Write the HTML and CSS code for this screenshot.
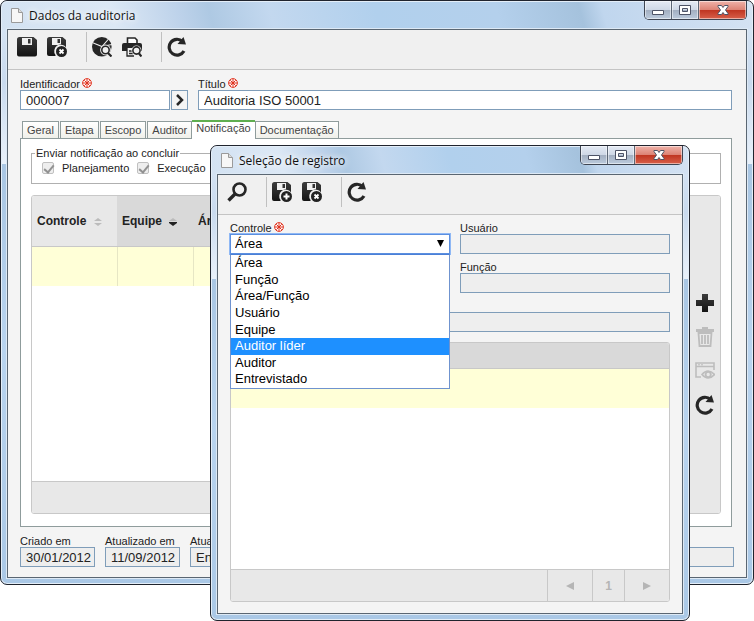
FILE: index.html
```html
<!DOCTYPE html>
<html lang="pt-BR">
<head>
  <meta charset="UTF-8" />
  <meta name="viewport" content="width=device-width, initial-scale=1" />
  <title>Dados da auditoria</title>
  <link rel="stylesheet" href="styles.css">
</head>
<body>

<svg class="sprite" aria-hidden="true">
  <defs>
    <linearGradient id="ink" x1="0" y1="0" x2="0" y2="1">
      <stop offset="0" stop-color="#3c3c3c" />
      <stop offset="1" stop-color="#141414" />
    </linearGradient>
  </defs>
  <symbol id="page" viewBox="0 0 12 15">
    <path d="M.5 .5h7l4 4v10h-11z" fill="#f7f7f7" stroke="#9a9a9a" />
    <path d="M7.500 .5v4h4" fill="#ddd" stroke="#9a9a9a" />
  </symbol>
  <symbol id="disk" viewBox="0 0 20 20">
    <path fill="url(#ink)" fill-rule="evenodd" d="M2.500 0h14l3.500 3v14.500q0 2-2 2H2q-2 0-2-2V2.500Q0 0 2.500 0zM5 1v7h10V1zM11 2h2.500v4.500H11z" />
  </symbol>
  <symbol id="disk-cut" viewBox="0 0 20 20">
    <path fill="url(#ink)" fill-rule="evenodd" d="M2.500 0h13l3.500 3v7.200a6.500 6.500 0 0 0-10.500 7.800v1H2q-2 0-2-2V2.500Q0 0 2.500 0zM5 1v7h9V1zM10.500 2H13v4h-2.500z" />
    <circle cx="14.500" cy="14.500" r="5.500" fill="#222" />
  </symbol>
  <symbol id="disk-close" viewBox="0 0 20 20">
    <use href="#disk-cut" />
    <path d="M12.500 12.500l4 4m0-4l-4 4" stroke="#fff" stroke-width="1.800" />
  </symbol>
  <symbol id="disk-add" viewBox="0 0 20 20">
    <use href="#disk-cut" />
    <path d="M14.500 11.500v6m-3-3h6" stroke="#fff" stroke-width="2" />
  </symbol>
  <symbol id="chart" viewBox="0 0 20 20">
    <circle cx="9.800" cy="9.800" r="9.800" fill="#262626" />
    <path d="M0 5.500l10 4L17 1.500M10 9.500l10-2" fill="none" stroke="#f0f0f0" stroke-width="1.100" />
    <circle cx="13.500" cy="13" r="5.400" fill="#f0f0f0" />
    <path d="M15 15l5 1v4h-4z" fill="#f0f0f0" />
    <circle cx="13.500" cy="13" r="3.700" fill="#f0f0f0" stroke="#262626" stroke-width="1.600" />
    <path d="M16 16l3.500 3.500" stroke="#262626" stroke-width="2.200" />
  </symbol>
  <symbol id="print" viewBox="0 0 20 20">
    <path d="M5.500 7V1h7.500l2 2v4" fill="#fff" stroke="#262626" stroke-width="1.600" />
    <path d="M2 6h16q2 0 2 2v6h-4v-3H5v3H0V8q0-2 2-2z" fill="#262626" />
    <path d="M5 11v8h7M7 14h4M7 16.500h4" fill="none" stroke="#262626" stroke-width="1.300" />
    <circle cx="14.500" cy="13.500" r="5" fill="#f0f0f0" />
    <circle cx="14.500" cy="13.500" r="3.600" fill="#f0f0f0" stroke="#262626" stroke-width="1.600" />
    <path d="M17 16.500l2.500 3" stroke="#262626" stroke-width="2.200" />
  </symbol>
  <symbol id="refresh" viewBox="0 0 20 20">
    <path d="M15.500 4.400A7.900 7.900 0 1 0 17 14" fill="none" stroke="#262626" stroke-width="3.200" />
    <path d="M16.500 0l2.500 7.500-8.500-.5z" fill="#262626" />
  </symbol>
  <symbol id="search" viewBox="0 0 20 20">
    <circle cx="12.500" cy="7.500" r="6" fill="none" stroke="#262626" stroke-width="2.600" />
    <path d="M8 12l-6.500 6.500" stroke="#262626" stroke-width="3.400" />
  </symbol>
  <symbol id="plus" viewBox="0 0 20 20">
    <path d="M7 1h6v6h6v6h-6v6H7v-6H1V7h6z" fill="url(#ink)" />
  </symbol>
  <symbol id="trash" viewBox="0 0 20 20">
    <path d="M1 2h6V0h6v2h6v3H1z" fill="#bdbdbd" />
    <path d="M3.500 6l1 13h11l1-13zM7 8v9M10 8v9M13 8v9" fill="none" stroke="#bdbdbd" stroke-width="1.800" />
  </symbol>
  <symbol id="preview" viewBox="0 0 20 20">
    <path d="M6 16H1V2h18v7M1 5.500h18" fill="none" stroke="#bdbdbd" stroke-width="1.600" />
    <path d="M3 3.800h2m1 0h2" stroke="#bdbdbd" />
    <path d="M7 13.500q6-7 12.500 0-6.500 7-12.500 0z" fill="#e8e8e8" stroke="#bdbdbd" stroke-width="1.600" />
    <circle cx="13.200" cy="13.500" r="2.600" fill="none" stroke="#bdbdbd" stroke-width="1.800" />
  </symbol>
  <symbol id="required" viewBox="0 0 10 10">
    <circle cx="5" cy="5" r="4.400" fill="#fff" stroke="#e0321e" />
    <path d="M5 1v8M1 5h8M2.300 2.300l5.400 5.400M7.700 2.300L2.300 7.700" stroke="#e0321e" stroke-width="1" />
  </symbol>
  <symbol id="win-min" viewBox="0 0 14 12">
    <path d="M1.500 6.500h11v4h-11z" fill="#fff" stroke="#4d5366" />
  </symbol>
  <symbol id="win-max" viewBox="0 0 14 12">
    <path fill-rule="evenodd" d="M1.500 1.500h11v9h-11zM4.500 4.500h5v3h-5z" fill="#fff" stroke="#4d5366" />
  </symbol>
  <symbol id="win-close" viewBox="0 0 14 12">
    <path d="M2 1.500h3.500L7 3.500l1.500-2H12v1L9.500 6 12 9.500v1H8.500L7 8.500l-1.500 2H2v-1L4.500 6 2 2.500z" fill="#fff" stroke="#4d5366" />
  </symbol>
</svg>

<main class="desktop">

  <section class="window" aria-label="Dados da auditoria">
    <header class="titlebar">
      <svg class="page-icon"><use href="#page" /></svg>
      <h1>Dados da auditoria</h1>
      <div class="win-buttons">
        <button type="button" class="win-btn" aria-label="Minimizar"><svg><use href="#win-min" /></svg></button>
        <button type="button" class="win-btn" aria-label="Maximizar"><svg><use href="#win-max" /></svg></button>
        <button type="button" class="win-btn close" aria-label="Fechar"><svg><use href="#win-close" /></svg></button>
      </div>
    </header>
    <div class="client">
      <div class="toolbar">
        <button type="button" class="icon-btn" aria-label="Salvar"><svg><use href="#disk" /></svg></button>
        <button type="button" class="icon-btn" aria-label="Salvar e sair"><svg><use href="#disk-close" /></svg></button>
        <span class="sep"></span>
        <button type="button" class="icon-btn" aria-label="Relatório"><svg><use href="#chart" /></svg></button>
        <button type="button" class="icon-btn" aria-label="Visualizar impressão"><svg><use href="#print" /></svg></button>
        <span class="sep"></span>
        <button type="button" class="icon-btn" aria-label="Atualizar"><svg><use href="#refresh" /></svg></button>
      </div>

      <form class="audit">
        <div class="fields">
          <div class="field field-id">
            <label for="ident">Identificador <svg class="req"><use href="#required" /></svg></label>
            <div class="combo">
              <input type="text" id="ident" value="000007" />
              <button type="button" class="go" aria-label="Próximo">
                <svg viewBox="0 0 10 12"><path d="M2 1l5 5-5 5" /></svg>
              </button>
            </div>
          </div>
          <div class="field grow">
            <label for="titulo">Título <svg class="req"><use href="#required" /></svg></label>
            <input type="text" id="titulo" value="Auditoria ISO 50001" />
          </div>
        </div>

        <div class="tabs" role="tablist">
          <button type="button" class="tab" role="tab">Geral</button>
          <button type="button" class="tab" role="tab">Etapa</button>
          <button type="button" class="tab" role="tab">Escopo</button>
          <button type="button" class="tab" role="tab">Auditor</button>
          <button type="button" class="tab active" role="tab" aria-selected="true">Notificação</button>
          <button type="button" class="tab" role="tab">Documentação</button>
        </div>

        <div class="panel">
          <fieldset class="notify">
            <legend>Enviar notificação ao concluir</legend>
            <label class="check"><input type="checkbox" checked disabled />Planejamento</label>
            <label class="check"><input type="checkbox" checked disabled />Execução</label>
          </fieldset>

          <div class="grid">
            <div class="grid-main">
              <table class="audit-table">
                <thead>
                  <tr>
                    <th class="col-control">Controle <svg class="sort off" viewBox="0 0 8 8"><path d="M0 3l4-3 4 3zM0 5l4 3 4-3z" /></svg></th>
                    <th class="col-team">Equipe <svg class="sort" viewBox="0 0 8 8"><path class="up" d="M0 3l4-3 4 3z" /><path d="M0 4h8v1L4 8 0 5z" /></svg></th>
                    <th>Área</th>
                  </tr>
                </thead>
                <tbody>
                  <tr><td></td><td></td><td></td></tr>
                </tbody>
              </table>
              <div class="grid-foot"></div>
            </div>
            <div class="grid-tools">
              <button type="button" class="icon-btn" aria-label="Adicionar"><svg><use href="#plus" /></svg></button>
              <button type="button" class="icon-btn" aria-label="Excluir" disabled><svg><use href="#trash" /></svg></button>
              <button type="button" class="icon-btn" aria-label="Visualizar" disabled><svg><use href="#preview" /></svg></button>
              <button type="button" class="icon-btn" aria-label="Atualizar"><svg><use href="#refresh" /></svg></button>
            </div>
          </div>
        </div>

        <div class="fields stamps">
          <div class="field date">
            <label for="criado">Criado em</label>
            <input type="text" id="criado" value="30/01/2012" readonly />
          </div>
          <div class="field date">
            <label for="atualizado">Atualizado em</label>
            <input type="text" id="atualizado" value="11/09/2012" readonly />
          </div>
          <div class="field grow">
            <label for="por">Atualizado por</label>
            <input type="text" id="por" value="En" readonly />
          </div>
        </div>
      </form>
    </div>
  </section>

  <section class="window dialog" role="dialog" aria-label="Seleção de registro">
    <header class="titlebar">
      <svg class="page-icon"><use href="#page" /></svg>
      <h2>Seleção de registro</h2>
      <div class="win-buttons">
        <button type="button" class="win-btn" aria-label="Minimizar"><svg><use href="#win-min" /></svg></button>
        <button type="button" class="win-btn" aria-label="Maximizar"><svg><use href="#win-max" /></svg></button>
        <button type="button" class="win-btn close" aria-label="Fechar"><svg><use href="#win-close" /></svg></button>
      </div>
    </header>
    <div class="client">
      <div class="toolbar">
        <button type="button" class="icon-btn" aria-label="Pesquisar"><svg><use href="#search" /></svg></button>
        <span class="sep"></span>
        <button type="button" class="icon-btn" aria-label="Salvar e novo"><svg><use href="#disk-add" /></svg></button>
        <button type="button" class="icon-btn" aria-label="Salvar e sair"><svg><use href="#disk-close" /></svg></button>
        <span class="sep"></span>
        <button type="button" class="icon-btn" aria-label="Atualizar"><svg><use href="#refresh" /></svg></button>
      </div>

      <form class="picker">
        <div class="field">
          <label for="controle">Controle <svg class="req"><use href="#required" /></svg></label>
          <div class="select">
            <select id="controle">
              <option selected>Área</option>
              <option>Função</option>
              <option>Área/Função</option>
              <option>Usuário</option>
              <option>Equipe</option>
              <option>Auditor líder</option>
              <option>Auditor</option>
              <option>Entrevistado</option>
            </select>
            <svg class="arrow" viewBox="0 0 8 8"><path d="M0 0h7L3.500 7z" /></svg>
            <ul class="menu" role="listbox">
              <li role="option">Área</li>
              <li role="option">Função</li>
              <li role="option">Área/Função</li>
              <li role="option">Usuário</li>
              <li role="option">Equipe</li>
              <li role="option" class="hover">Auditor líder</li>
              <li role="option">Auditor</li>
              <li role="option">Entrevistado</li>
            </ul>
          </div>
        </div>
        <div class="field">
          <label for="usuario">Usuário</label>
          <input type="text" id="usuario" readonly />
        </div>
        <div class="field right">
          <label for="funcao">Função</label>
          <input type="text" id="funcao" readonly />
        </div>
        <div class="field wide">
          <input type="text" aria-label="Equipe" readonly />
        </div>

        <div class="grid wide">
          <div class="grid-main">
            <table class="picker-table">
              <thead><tr><th></th></tr></thead>
              <tbody><tr><td></td></tr></tbody>
            </table>
            <div class="grid-foot pager">
              <button type="button" class="page-step" aria-label="Anterior" disabled><svg viewBox="0 0 8 8"><path d="M8 0v8L0 4z" /></svg></button>
              <button type="button" class="page-num" disabled>1</button>
              <button type="button" class="page-step" aria-label="Próxima" disabled><svg viewBox="0 0 8 8"><path d="M0 0v8l8-4z" /></svg></button>
            </div>
          </div>
        </div>
      </form>
    </div>
  </section>

</main>

</body>
</html>
```

FILE: styles.css
```css
* {
  margin: 0; padding: 0; box-sizing: border-box;
}
body {
  background: #fff;
  color: #222;
  font-family: "Liberation Sans", Arial, sans-serif;
  font-size: 11px;
  line-height: 12px;
}
button, input, select {
  font: inherit;
  color: inherit;
}
button {
  border: none;
  background: none;
}
svg {
  display: block;
}
.sprite {
  position: absolute;
  width: 0;
  height: 0;
}
.desktop {
  position: relative;
  min-height: 621px;
}

/* janelas */
.window {
  padding: 0 6px 6px;
  border: 1px solid #20242e;
  border-radius: 7px;
  background: linear-gradient(#dbe8f6, #c9daee 14%, #e9f1fa 28%, #a9c6e3 28%, #b9d4ef 60%, #aac8e6);
  box-shadow: inset 0 0 0 1px #e4eef8;
}
.dialog {
  position: absolute;
  top: 145px;
  left: 210px;
  right: 64px;
}
.titlebar {
  display: flex;
  align-items: center;
  height: 28px;
  margin: 0 -5px;
  padding: 0 5px 0 9px;
  border-top: 1px solid #e4eef8;
  border-radius: 6px 6px 0 0;
  background: linear-gradient(75deg, #d3e2f2, #dce8f5 15%, #bdd2ea 24%, #aec9e3 28%, #c3d8ef 36%, #b1d0ed 50%, #b4d0ec 66%, #a5c2dd 77%, #c0d6ee 80%, #d4e2f2);
}
.titlebar h1, .titlebar h2 {
  margin-left: 6px;
  font-family: "Open Sans", sans-serif;
  font-size: 12px;
  line-height: 16px;
  font-weight: normal;
  color: #111;
  text-shadow: 0 0 6px #fff, 0 0 8px #fff;
}
.page-icon {
  width: 12px;
  height: 15px;
}
.win-buttons {
  display: flex;
  align-self: flex-start;
  margin-left: auto;
  margin-top: -1px;
  border: 1px solid #3e4552;
  border-top: none;
  border-radius: 0 0 5px 5px;
  overflow: hidden;
}
.win-btn {
  display: flex;
  align-items: center;
  justify-content: center;
  width: 27px;
  height: 18px;
  border-right: 1px solid #5c6675;
  background: linear-gradient(#e4eaf4, #cfd8e6 48%, #a2aec0 50%, #bccbdd);
  box-shadow: inset 0 0 0 1px rgba(255,255,255,0.5);
}
.win-btn.close {
  width: 47px;
  border-right: none;
  background: linear-gradient(#efb3aa, #dd8375 48%, #bf3420 50%, #d8604a);
}
.win-btn svg {
  width: 14px;
  height: 12px;
}
.client {
  border: 1px solid #5a6672;
  background: #f4f4f4;
  box-shadow: 0 0 0 1px #dde9f5;
}

/* barra de ferramentas */
.toolbar {
  display: flex;
  align-items: center;
  gap: 10px;
  padding: 2px 9px 7px;
  border-bottom: 1px solid #c4c4c4;
  background: #f0f0f0;
}
.sep {
  width: 1px;
  height: 30px;
  margin-left: 9px;
  margin-right: -5px;
  background: #c0c0c0;
}
.icon-btn, .icon-btn svg {
  display: block;
  width: 20px;
  height: 20px;
}

/* campos */
.audit {
  padding: 8px 12px 10px;
}
.fields {
  display: flex;
  gap: 10px;
  margin-right: 2px;
}
.field label {
  display: flex;
  gap: 2px;
  height: 12px;
  white-space: nowrap;
}
.field-id {
  width: 168px;
}
.grow {
  flex: 1;
}
.date {
  width: 75px;
}
.combo {
  display: flex;
  gap: 1px;
}
.req {
  width: 10px;
  height: 10px;
}
input[type="text"] {
  display: block;
  width: 100%;
  min-width: 0;
  height: 20px;
  padding: 0 0 0 5px;
  border: 1px solid #7f9db9;
  background: #fff;
  font-size: 13px;
}
input[type="text"]:read-only {
  background: #eee;
}
.go {
  display: flex;
  align-items: center;
  justify-content: center;
  flex: none;
  width: 17px;
  border: 1px solid #7f9db9;
}
.go svg {
  width: 10px;
  height: 12px;
  fill: none;
  stroke: #262626;
  stroke-width: 2.5;
}

/* abas */
.tabs {
  display: flex;
  align-items: flex-end;
  gap: 1px;
  height: 18px;
  margin-top: 10px;
  padding-left: 2px;
}
.tab {
  height: 17px;
  padding: 0 4px;
  border: 1px solid #8f9c9c;
  border-bottom: none;
  background: linear-gradient(#fff, #f0f0ea);
  color: #444;
}
.tab.active {
  position: relative;
  height: 19px;
  margin: 0 -1px -1px;
  padding-bottom: 6px;
  border: none;
  border-top: 2px solid #5fae50;
  background: #fff;
}
.panel {
  margin-right: 2px;
  padding: 8px 10px 12px;
  border: 1px solid #8f9c9c;
  background: #fff;
}
.notify {
  display: flex;
  gap: 8px;
  padding: 3px 10px 9px;
  border: 1px solid #b0b0b0;
}
.notify legend {
  margin-left: -7px;
  padding: 0 1px;
}
.check {
  display: flex;
  align-items: center;
  gap: 8px;
}
.check input {
  appearance: none;
  width: 12px;
  height: 12px;
  border: 1px solid #c0c0c0;
  border-radius: 2px;
  background: #eee;
}
.check input::before {
  content: "";
  display: block;
  width: 4px;
  height: 8px;
  margin: 0 0 0 3px;
  border: solid #929292;
  border-width: 0 2px 2px 0;
  transform: rotate(40deg);
}

/* tabelas */
.grid {
  display: flex;
  margin-top: 11px;
  border: 1px solid #c8c8c8;
  border-radius: 3px;
  background: #fff;
  overflow: hidden;
}
.grid-main {
  display: flex;
  flex-direction: column;
  flex: 1;
}
.audit .grid {
  min-height: 319px;
}
table {
  width: 100%;
  border-collapse: collapse;
  table-layout: fixed;
}
th {
  height: 50px;
  padding-left: 5px;
  border-bottom: 1px solid #c8c8c8;
  background: #d9d9d9;
  font-size: 12px;
  text-align: left;
}
td {
  height: 40px;
  border-right: 1px solid #e6e6c4;
  background: #ffffd7;
}
td:last-child {
  border-right: none;
}
.col-control {
  width: 85px;
  background: #e8e8e8;
}
.col-team {
  width: 76px;
}
.sort {
  display: inline-block;
  width: 8px;
  height: 8px;
  margin-left: 4px;
  vertical-align: -1px;
  fill: #222;
}
.sort.off, .sort .up {
  fill: #bbb;
}
.grid-foot {
  height: 32px;
  margin-top: auto;
  border-top: 1px solid #c8c8c8;
  background: #e8e8e8;
}
.grid-tools {
  display: flex;
  flex-direction: column;
  gap: 14px;
  width: 31px;
  padding: 97px 5px 0 6px;
  background: #e8e8e8;
}
.stamps {
  margin-top: 8px;
  margin-right: 0;
}

/* seleção de registro */
.picker {
  display: grid;
  grid-template-columns: 220px 1fr;
  gap: 7px 10px;
  padding: 7px 12px 11px;
}
.right {
  grid-column: 2;
}
.wide {
  grid-column: 1 / -1;
}
.field.wide {
  padding-top: 12px;
}
.select {
  position: relative;
}
select {
  display: block;
  appearance: none;
  width: 100%;
  height: 20px;
  padding: 0 4px;
  border: 1px solid #5b8fe0;
  background: #fff;
  box-shadow: 0 0 0 1px #8fb8f5;
  color: #000;
  font-size: 13px;
  line-height: 18px;
}
.arrow {
  position: absolute;
  top: 6px;
  right: 5px;
  width: 8px;
  height: 8px;
  pointer-events: none;
}
.menu {
  position: absolute;
  top: 20px;
  left: 0;
  right: 0;
  z-index: 1;
  display: grid;
  grid-auto-rows: 1fr;
  height: 135px;
  border: 1px solid #6f93cf;
  border-top-color: #4a7fd6;
  background: #fff;
  color: #000;
  font-size: 13px;
  line-height: 16px;
  list-style: none;
}
.menu li {
  padding-left: 4px;
}
.menu .hover {
  background: #1e90ff;
  color: #fff;
}
.picker .grid {
  min-height: 260px;
  margin-top: 3px;
}
.picker-table th {
  height: 25px;
}
.pager {
  display: flex;
  justify-content: flex-end;
  color: #b5b5b5;
  font-size: 12px;
  font-weight: bold;
}
.pager button {
  display: flex;
  align-items: center;
  justify-content: center;
  border-left: 1px solid #c8c8c8;
}
.page-step {
  width: 45px;
}
.page-num {
  width: 32px;
}
.page-step svg {
  width: 8px;
  height: 8px;
  fill: #b5b5b5;
}
```
